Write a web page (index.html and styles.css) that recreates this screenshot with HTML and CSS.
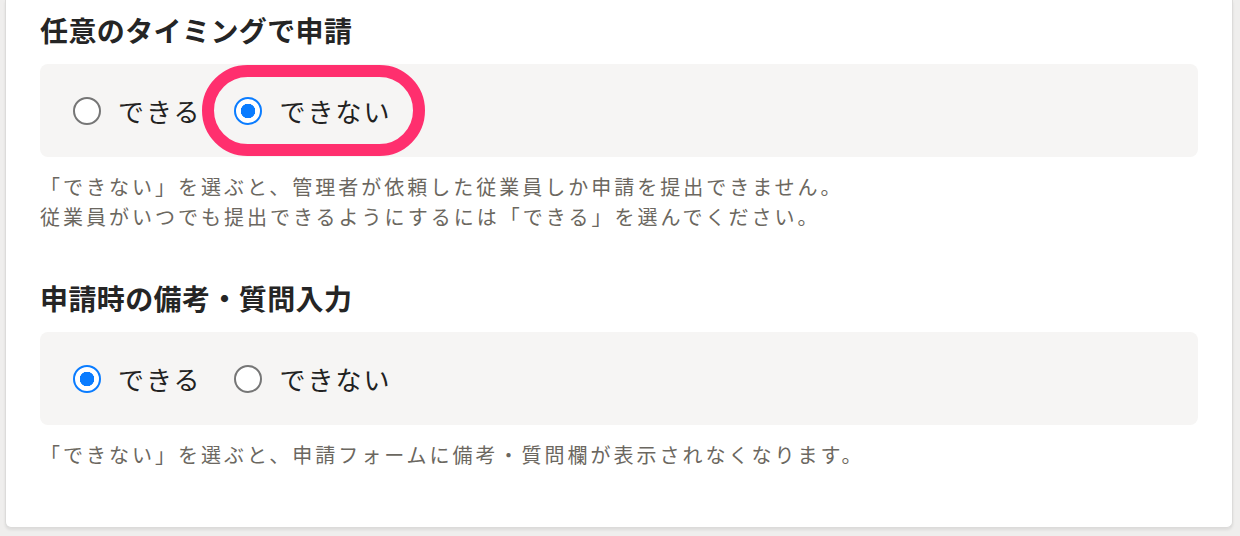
FILE: index.html
```html
<!DOCTYPE html>
<html lang="ja">
<head>
  <meta charset="UTF-8" />
  <title>申請設定</title>
  <link rel="stylesheet" href="styles.css">
</head>
<body>
  <div class="card">
    <!-- 任意のタイミングで申請 -->
    <section class="setting">
      <h2 class="setting-title">任意のタイミングで申請</h2>
      <div class="choice-box">
        <label class="choice">
          <input type="radio" name="anytime" value="yes" />
          <span class="choice-label">できる</span>
        </label>
        <label class="choice marked">
          <input type="radio" name="anytime" value="no" checked />
          <span class="choice-label">できない</span>
          <span class="highlight"></span>
        </label>
      </div>
      <p class="note">「できない」を選ぶと、管理者が依頼した従業員しか申請を提出できません。<br>従業員がいつでも提出できるようにするには「できる」を選んでください。</p>
    </section>

    <!-- 申請時の備考・質問入力 -->
    <section class="setting">
      <h2 class="setting-title">申請時の備考・質問入力</h2>
      <div class="choice-box">
        <label class="choice">
          <input type="radio" name="remarks" value="yes" checked />
          <span class="choice-label">できる</span>
        </label>
        <label class="choice">
          <input type="radio" name="remarks" value="no" />
          <span class="choice-label">できない</span>
        </label>
      </div>
      <p class="note">「できない」を選ぶと、申請フォームに備考・質問欄が表示されなくなります。</p>
    </section>
  </div>
</body>
</html>
```

FILE: styles.css
```css
* {
  box-sizing: border-box;
  margin: 0;
  padding: 0;
  font-family: "Noto Sans CJK JP", "Noto Sans", sans-serif;
}

html, body {
  height: 100%;
  background: #efeeed;
  overflow: hidden;
}

body {
  padding: 0 7px 0 5px;
}

.card {
  background: #fff;
  border: 1px solid #dcdbda;
  border-top: none;
  border-radius: 0 0 6px 6px;
  box-shadow: 0 2px 3px rgba(0, 0, 0, 0.08);
  padding: 12px 34px 57px 34px;
}

.setting + .setting {
  margin-top: 48px;
}

.setting-title {
  font-size: 28px;
  line-height: 36px;
  font-weight: 700;
  color: #252525;
  letter-spacing: 0.4px;
}

.choice-box {
  margin-top: 16px;
  background: #f6f5f4;
  border-radius: 8px;
  height: 93px;
  padding: 0 33px;
  display: flex;
  align-items: center;
  gap: 33px;
}

.choice {
  position: relative;
  display: flex;
  align-items: center;
  gap: 17px;
  cursor: pointer;
}

.choice input {
  appearance: none;
  width: 28px;
  height: 28px;
  border: 2px solid #767676;
  border-radius: 50%;
  background: #fff;
  margin: 0;
}

.choice input:checked {
  border: 2.5px solid #0a7cff;
  background: radial-gradient(circle, #0a7cff 0 7px, #fff 7.5px);
}

.choice-label {
  font-size: 26px;
  line-height: 34px;
  color: #222;
  letter-spacing: 2px;
}

/* 注目用の枠 */
.highlight {
  position: absolute;
  left: -32px;
  top: -29px;
  width: 223px;
  height: 91px;
  border: 12px solid #ff2f6e;
  border-radius: 46px;
  pointer-events: none;
}

.note {
  margin-top: 15px;
  font-size: 20px;
  line-height: 30px;
  color: #6b6760;
  letter-spacing: 3px;
}
```
